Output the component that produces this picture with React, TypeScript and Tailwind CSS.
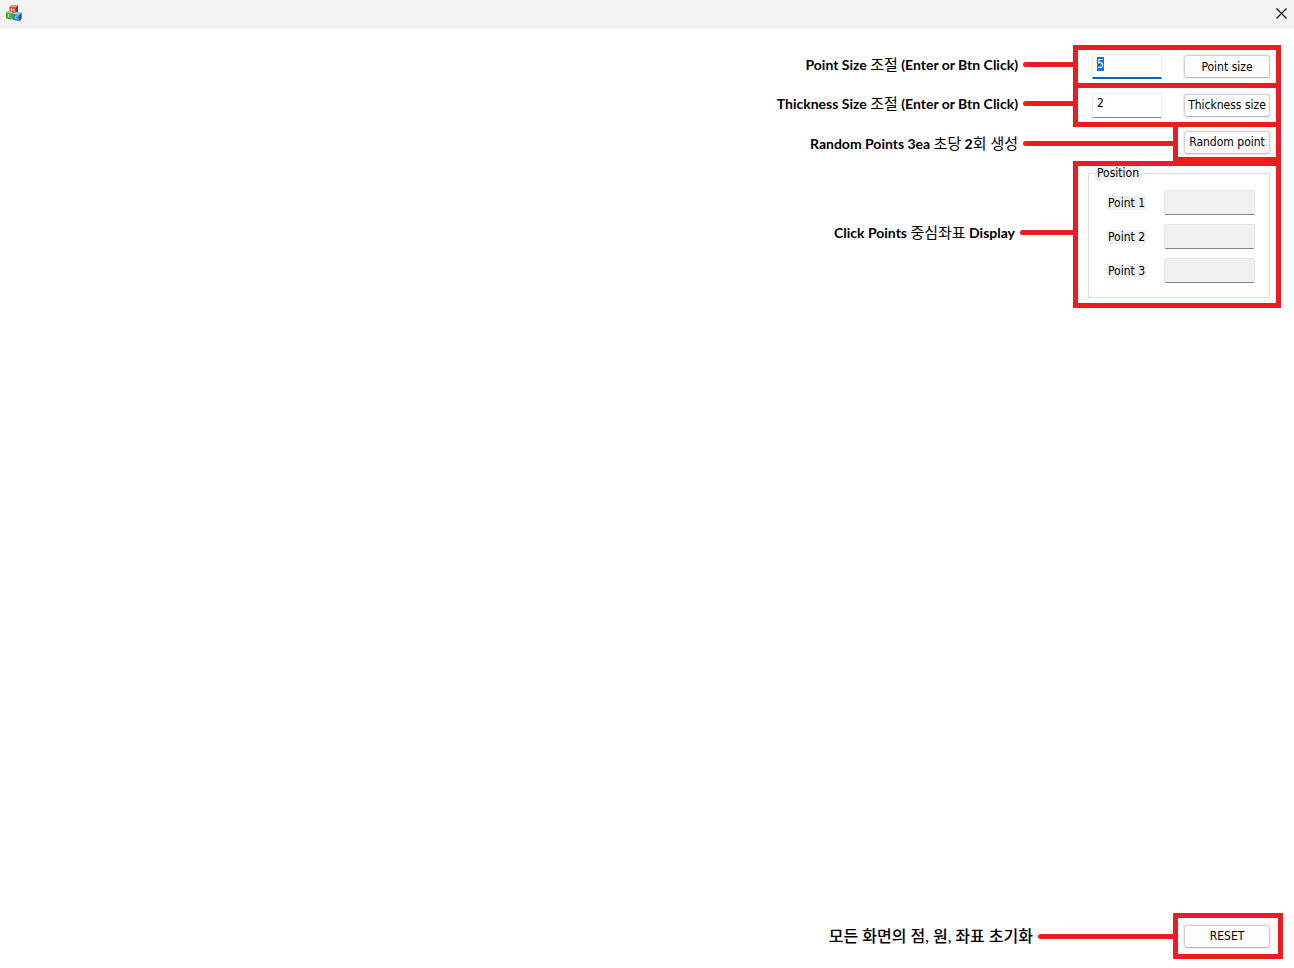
import { useEffect, useRef, useState } from "react";
import type { ReactNode } from "react";

const ui = "font-['DejaVu_Sans_Condensed','DejaVu_Sans','Noto_Sans_CJK_KR',sans-serif] text-[12px] leading-[14px] text-black";

function Ko({ children }: { children: ReactNode }) {
  return <span className="text-[15px] font-normal">{children}</span>;
}

function Callout({ line, nudge, children }: { line: string; nudge: string; children: ReactNode }) {
  return (
    <div className={`flex items-center gap-[5px] ${nudge}`}>
      <p className="whitespace-nowrap font-['Lato','Noto_Sans_CJK_KR',sans-serif] text-[14px] font-bold leading-5 text-black">
        {children}
      </p>
      <span className={`h-[5px] rounded-l-full bg-[#ed1c24] ${line}`} />
    </div>
  );
}

function PushButton({ children, onClick }: { children: ReactNode; onClick?: () => void }) {
  return (
    <div className="flex bg-[#f0f0f0] p-px">
      <button
        type="button"
        onClick={onClick}
        className={`h-[23px] w-[86px] whitespace-nowrap rounded border border-[#d0d0d0] border-b-[#bababa] bg-[#fdfdfd] text-center ${ui}`}
      >
        {children}
      </button>
    </div>
  );
}

function AppIcon() {
  return (
    <svg width="16" height="16" viewBox="0 0 16 16" aria-hidden="true">
      <path d="M3.500 1.800 6 0l6 .8v6.700L9.500 9l-6-1z" fill="#d8452f" />
      <path d="M3.500 1.800 6 0l6 .8-2 1.700z" fill="#ee8f7c" />
      <path d="M10 2.500 12 .8v6.700L9.500 9z" fill="#a82a1c" />
      <path d="M5.300 6.500v-3l1.300 1.700L8 3.800v3" fill="none" stroke="#f8d5cd" strokeWidth=".9" />
      <path d="M0 7.500 2 6l5 1v6l-2 1.800-5-1.300z" fill="#58a838" />
      <path d="M0 7.500 2 6l5 1-2 1.600z" fill="#a9d68f" />
      <path d="M2.600 9.300v3" stroke="#dcf2d0" strokeWidth="1" />
      <path d="M6.500 9 9 7l6.500.8v6L13 16l-6.500-1z" fill="#3484c8" />
      <path d="M6.500 9 9 7l6.500.8L13.300 9.900z" fill="#9cc9ec" />
      <path d="M13.300 9.900l2.200-2.100v6L13 16z" fill="#1b589a" />
      <path d="M11.500 11.200c-2.400-1-3.200 2.600-.2 2.700" fill="none" stroke="#d5eafa" strokeWidth=".9" />
    </svg>
  );
}

export default function App() {
  const [size, setSize] = useState("5");
  const [thickness, setThickness] = useState("2");
  const sizeRef = useRef<HTMLInputElement>(null);

  useEffect(() => {
    sizeRef.current?.focus();
    sizeRef.current?.select();
  }, []);

  return (
    <div className="flex min-h-screen flex-col bg-white">
      <header className="flex h-[29px] shrink-0 items-center justify-between bg-[#f3f3f3] pb-[3px] pl-[6px] pr-[6px]">
        <AppIcon />
        <button type="button" aria-label="Close" className="p-px">
          <svg width="11" height="11" viewBox="0 0 11 11" aria-hidden="true">
            <path d="M.5.5l10 10M10.500.5l-10 10" stroke="#111" strokeWidth="1.200" />
          </svg>
        </button>
      </header>

      <main className="flex flex-1 flex-col items-end pb-[9px] pt-4">
        <div className="mr-[13px] flex">
          <Callout line="w-[50px]" nudge="pb-1">
            Point Size <Ko>조절</Ko> (Enter or Btn Click)
          </Callout>
          <div className="flex h-[43px] w-[208px] items-center justify-between border-[5px] border-[#ed1c24] pl-[14px] pr-[5px]">
            <input
              ref={sizeRef}
              aria-label="Point size"
              value={size}
              onChange={(e) => setSize(e.target.value)}
              className={`h-[25px] w-[70px] border border-b-2 border-[#ececec] border-b-[#0067c0] bg-white pb-1 pl-1 outline-none selection:bg-[#0078d7] selection:text-white ${ui}`}
            />
            <PushButton>Point size</PushButton>
          </div>
        </div>

        <div className="-mt-[5px] mr-[13px] flex">
          <Callout line="w-[50px]" nudge="pb-1">
            Thickness Size <Ko>조절</Ko> (Enter or Btn Click)
          </Callout>
          <div className="flex h-11 w-[208px] items-center justify-between border-[5px] border-[#ed1c24] pl-[14px] pr-[5px]">
            <input
              aria-label="Thickness size"
              value={thickness}
              onChange={(e) => setThickness(e.target.value)}
              className={`h-[25px] w-[70px] border border-[#ececec] border-b-[#868686] bg-white pb-1 pl-1 outline-none ${ui}`}
            />
            <PushButton>Thickness size</PushButton>
          </div>
        </div>

        <div className="-mt-[5px] mr-[13px] flex">
          <Callout line="w-[150px]" nudge="pt-[3px]">
            Random Points 3ea <Ko>초당</Ko> 2<Ko>회 생성</Ko>
          </Callout>
          <div className="flex h-10 w-[108px] items-center justify-center border-[5px] border-[#ed1c24]">
            <PushButton>Random point</PushButton>
          </div>
        </div>

        <div className="-mt-px mr-[13px] flex">
          <Callout line="w-[53px]" nudge="pb-1">
            Click Points <Ko>중심좌표</Ko> Display
          </Callout>
          <div className="w-[208px] border-[5px] border-[#ed1c24] pb-[5px] pl-[10px] pr-[6px]">
            <fieldset className="h-[132px] border border-[#dcdcdc] pl-[18px] pr-[14px]">
              <legend className={`-ml-[12px] bg-[#f0f0f0] px-0.5 ${ui}`}>Position</legend>
              <div className="flex flex-col gap-[9px] pt-[10px]">
                {[1, 2, 3].map((n) => (
                  <div key={n} className="flex items-center justify-between">
                    <label htmlFor={`point-${n}`} className={`bg-[#f0f0f0] px-px ${ui}`}>
                      Point {n}
                    </label>
                    <input
                      id={`point-${n}`}
                      readOnly
                      className={`h-[25px] w-[91px] rounded-xs border border-[#e8e8e8] border-b-[#868686] bg-[#f0f0f0] px-1 outline-none ${ui}`}
                    />
                  </div>
                ))}
              </div>
            </fieldset>
          </div>
        </div>

        <div className="mr-[11px] mt-auto flex">
          <Callout line="w-[135px]" nudge="">
            <span className="text-[16px] font-medium">모든 화면의 점, 원, 좌표 초기화</span>
          </Callout>
          <div className="flex h-[46px] w-[110px] items-center border-[5px] border-[#ed1c24] pl-[5px]">
            <PushButton
              onClick={() => {
                setSize("5");
                setThickness("2");
              }}
            >
              RESET
            </PushButton>
          </div>
        </div>
      </main>
    </div>
  );
}
